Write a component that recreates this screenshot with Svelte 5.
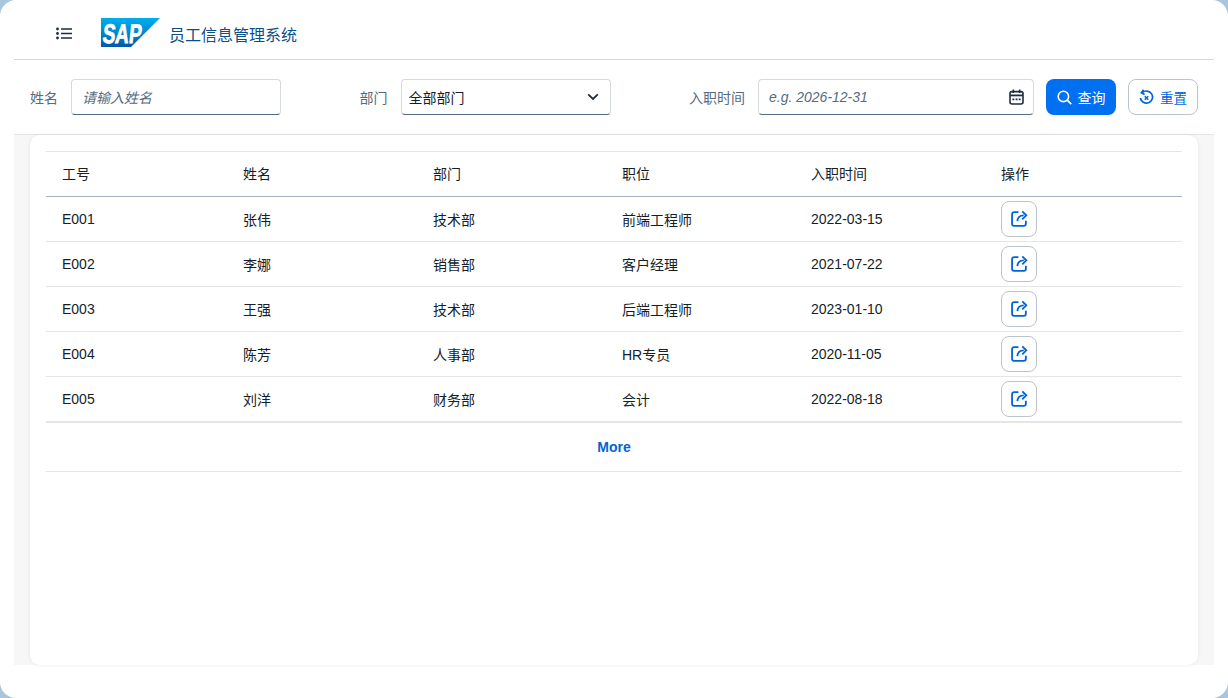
<script>
  const rows = [
    ['E001', '张伟', '技术部', '前端工程师', '2022-03-15'],
    ['E002', '李娜', '销售部', '客户经理', '2021-07-22'],
    ['E003', '王强', '技术部', '后端工程师', '2023-01-10'],
    ['E004', '陈芳', '人事部', 'HR专员', '2020-11-05'],
    ['E005', '刘洋', '财务部', '会计', '2022-08-18']
  ];
  const heads = ['工号', '姓名', '部门', '职位', '入职时间', '操作'];
</script>

<div class="shell">
  <header class="top">
    <button class="menu" aria-label="menu">
      <svg width="16" height="13" viewBox="0 0 16 13">
        <circle cx="1.5" cy="2" r="1.4" fill="#1d2d3e" />
        <circle cx="1.5" cy="6.5" r="1.4" fill="#1d2d3e" />
        <circle cx="1.5" cy="11" r="1.4" fill="#1d2d3e" />
        <path d="M5 2h11M5 6.5h11M5 11h11" stroke="#1d2d3e" stroke-width="1.5" fill="none" />
      </svg>
    </button>
    <svg class="logo" width="59" height="29" viewBox="0 0 59 29">
      <defs>
        <linearGradient id="sapg" x1="0" y1="0" x2="0" y2="1">
          <stop offset="0" stop-color="#00aeef" />
          <stop offset="0.5" stop-color="#0088d0" />
          <stop offset="1" stop-color="#0058a8" />
        </linearGradient>
      </defs>
      <polygon points="0,0 59,0 30,29 0,29" fill="url(#sapg)" />
      <text x="3.5" y="24.5" class="logotext" transform="skewX(-6)" textLength="39" lengthAdjust="spacingAndGlyphs">SAP</text>
    </svg>
    <h1>员工信息管理系统</h1>
  </header>

  <section class="filter">
    <div class="fields">
      <div class="field">
        <span class="lab">姓名</span>
        <div class="box w210"><span class="ph">请输入姓名</span></div>
      </div>
      <div class="field">
        <span class="lab">部门</span>
        <div class="box w210 sel">
          <span class="val">全部部门</span>
          <svg width="12" height="8" viewBox="0 0 12 8"><path d="M1.2 1.4 6 6l4.8-4.6" fill="none" stroke="#1d2d3e" stroke-width="1.8" /></svg>
        </div>
      </div>
      <div class="field">
        <span class="lab">入职时间</span>
        <div class="box w276 date">
          <span class="ph">e.g. 2026-12-31</span>
          <svg width="15" height="16" viewBox="0 0 15 16">
            <rect x="1" y="2.6" width="13" height="12.4" rx="2" fill="none" stroke="#1d2d3e" stroke-width="1.6" />
            <path d="M1 6.4h13" stroke="#1d2d3e" stroke-width="1.8" />
            <path d="M4.3 .4v3.6M10.7 .4v3.6" stroke="#1d2d3e" stroke-width="1.6" />
            <path d="M3.4 10.4h1.9M6.6 10.4h1.9M9.7 10.4h1.9" stroke="#1d2d3e" stroke-width="1.8" />
          </svg>
        </div>
      </div>
    </div>
    <button class="btn primary">
      <svg width="15" height="15" viewBox="0 0 15 15"><circle cx="6.4" cy="6.4" r="5.2" fill="none" stroke="#fff" stroke-width="1.6" /><path d="m10.2 10.2 4 4" stroke="#fff" stroke-width="1.7" /></svg>
      查询
    </button>
    <button class="btn ghost">
      <svg width="15" height="16" viewBox="0 0 15 16">
        <path d="M3.2 3.7A6.1 6.1 0 1 1 1.4 9" fill="none" stroke="#0064d9" stroke-width="1.7" />
        <path d="M4.6.8 2.4 3.7l3.2 1.9" fill="none" stroke="#0064d9" stroke-width="1.7" />
        <path d="m5.7 7.2 3.6 3.6M9.3 7.2l-3.6 3.6" stroke="#0064d9" stroke-width="1.5" />
      </svg>
      重置
    </button>
  </section>

  <main class="body">
    <div class="card">
      <table>
        <colgroup>
          <col style="width:181px" /><col style="width:190px" /><col style="width:189px" /><col style="width:189px" /><col style="width:190px" /><col />
        </colgroup>
        <thead>
          <tr>{#each heads as h}<th>{h}</th>{/each}</tr>
        </thead>
        <tbody>
          {#each rows as r}
            <tr>
              {#each r as c}<td>{c}</td>{/each}
              <td>
                <button class="act" aria-label="open">
                  <svg width="17" height="17" viewBox="0 0 16 16">
                    <path d="M7 2H3a2 2 0 0 0-2 2v9a2 2 0 0 0 2 2h9a2 2 0 0 0 2-2v-3" fill="none" stroke="#0064d9" stroke-width="1.7" />
                    <path d="M6 10.5C6.2 7 8.2 5 12 5" fill="none" stroke="#0064d9" stroke-width="1.7" />
                    <path d="M10.6 1.2 14.4 5l-3.8 3.8" fill="none" stroke="#0064d9" stroke-width="1.7" />
                  </svg>
                </button>
              </td>
            </tr>
          {/each}
        </tbody>
      </table>
      <div class="more">More</div>
    </div>
  </main>
</div>

<style>
  :global(body) {
    margin: 0;
    background: #a9c6dc;
    font-family: "Liberation Sans", "Noto Sans CJK SC", sans-serif;
  }
  .shell {
    width: 1228px;
    height: 698px;
    box-sizing: border-box;
    background: #fff;
    border-radius: 16px;
    padding: 0 14px 33px;
    display: flex;
    flex-direction: column;
  }
  .top {
    height: 59px;
    box-sizing: content-box;
    border-bottom: 1px solid #d9d9d9;
    display: flex;
    align-items: center;
    flex: none;
  }
  .menu {
    border: 0;
    background: none;
    padding: 0;
    margin: 8px 0 0 42px;
    width: 16px;
    height: 13px;
    display: block;
    line-height: 0;
  }
  .logo {
    margin: 6px 0 0 29px;
    flex: none;
  }
  .logotext {
    font: 700 27px "Liberation Sans", sans-serif;
    fill: #fff;
    stroke: #fff;
    stroke-width: 0.8px;
  }
  h1 {
    margin: 8px 0 0 9px;
    font-size: 16px;
    font-weight: 400;
    color: #0a4f87;
  }
  .filter {
    height: 74px;
    flex: none;
    border-bottom: 1px solid #e5e5e5;
    padding: 0 16px;
    display: flex;
    align-items: center;
    gap: 12px;
  }
  .fields {
    flex: 1;
    display: flex;
    justify-content: space-between;
  }
  .field {
    display: flex;
    align-items: center;
    gap: 13px;
  }
  .lab {
    font-size: 14px;
    color: #556b82;
    margin-top: -1px;
  }
  .box {
    box-sizing: border-box;
    height: 36px;
    background: #fff;
    border: 1px solid #d5dadd;
    border-bottom-color: #556b82;
    border-radius: 4px;
    display: flex;
    align-items: center;
    justify-content: space-between;
    font-size: 14px;
  }
  .box span {
    margin-top: -1px;
  }
  .w210 { width: 210px; padding: 0 10px; }
  .w276 { width: 276px; padding: 0 9px 0 10px; }
  .sel { padding: 0 11px 0 7px; }
  .ph {
    font-style: italic;
    color: #556b82;
    font-size: 14px;
  }
  .val { color: #131e29; }
  .date svg { flex: none; }
  .btn {
    box-sizing: border-box;
    width: 70px;
    height: 36px;
    border-radius: 8px;
    font: 14px "Liberation Sans", "Noto Sans CJK SC", sans-serif;
    display: flex;
    align-items: center;
    justify-content: center;
    gap: 6px;
    padding: 0;
  }
  .primary {
    background: #0070f2;
    color: #fff;
    border: 0;
  }
  .ghost {
    background: #fff;
    color: #0064d9;
    border: 1px solid #bcc3ca;
    font-size: 13.5px;
  }
  .body {
    flex: 1;
    background: #f7f7f7;
    padding: 0 16px;
    min-height: 0;
    display: flex;
  }
  .card {
    flex: 1;
    background: #fff;
    border-radius: 10px;
    box-shadow: 0 0 4px rgba(0, 0, 0, 0.07);
    padding: 16px 16px 0;
  }
  table {
    width: 100%;
    border-collapse: separate;
    border-spacing: 0;
    table-layout: fixed;
    font-size: 14px;
    color: #131e29;
  }
  th {
    padding: 0 16px 2px;
    text-align: left;
    font-weight: 400;
    border-top: 1px solid #e5e5e5;
    border-bottom: 1px solid #a8b3bd;
    box-sizing: content-box;
    height: 42px;
  }
  td {
    height: 44px;
    padding: 0 16px;
    border-bottom: 1px solid #e5e5e5;
  }
  .act {
    display: flex;
    align-items: center;
    justify-content: center;
    box-sizing: border-box;
    width: 36px;
    height: 36px;
    padding: 0 0 2px;
    background: #fff;
    border: 1px solid #bcc3ca;
    border-radius: 8px;
  }
  .more {
    height: 50px;
    border-top: 1px solid #e5e5e5;
    border-bottom: 1px solid #e5e5e5;
    box-sizing: border-box;
    display: flex;
    align-items: center;
    justify-content: center;
    color: #0064d9;
    font-size: 14px;
    font-weight: 700;
  }
</style>
